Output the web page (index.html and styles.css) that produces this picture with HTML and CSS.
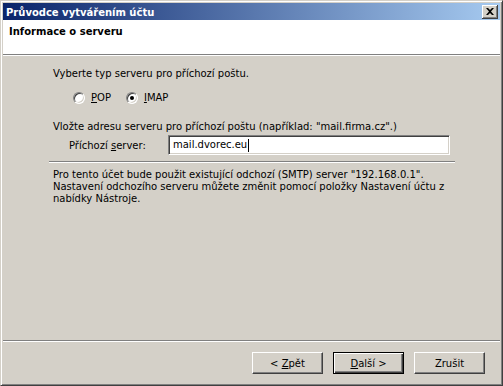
FILE: index.html
```html
<!DOCTYPE html>
<html lang="cs">
  <head>
    <meta charset="UTF-8" />
    <title>Průvodce vytvářením účtu</title>
    <link rel="stylesheet" href="styles.css">
  </head>
  <body>
    <div class="window">
      <div class="titlebar">
        <span class="title">Průvodce vytvářením účtu</span>
        <span class="close-btn">
          <svg width="8" height="7" viewBox="0 0 8 7">
            <path d="M0 0h2l2 2 2-2h2L5 3.5 8 7H6L4 5 2 7H0l3-3.5z" fill="#000" />
          </svg>
        </span>
      </div>

      <div class="header">
        <div class="header-title">Informace o serveru</div>
      </div>
      <div class="sep"></div>

      <div class="content">
        <p class="line">Vyberte typ serveru pro příchozí poštu.</p>
        <div class="radio-row">
          <label class="radio"><span class="radio-dot"></span><span><u>P</u>OP</span></label>
          <label class="radio"><span class="radio-dot checked"></span><span><u>I</u>MAP</span></label>
        </div>

        <p class="line hint">Vložte adresu serveru pro příchozí poštu (například: "mail.firma.cz".)</p>
        <div class="field-row">
          <span class="field-label">Příchozí <u>s</u>erver:</span>
          <div class="textbox">mail.dvorec.eu<span class="caret"></span></div>
        </div>
        <div class="sep inner-sep"></div>

        <p class="note">
          Pro tento účet bude použit existující odchozí (SMTP) server "192.168.0.1".<br>
          Nastavení odchozího serveru můžete změnit pomocí položky Nastavení účtu z<br>
          nabídky Nástroje.
        </p>
      </div>

      <div class="sep"></div>
      <div class="buttons">
        <button class="btn">&lt; <u>Z</u>pět</button>
        <button class="btn default"><u>D</u>alší &gt;</button>
        <button class="btn">Zrušit</button>
      </div>
    </div>
  </body>
</html>
```

FILE: styles.css
```css
body {
  margin: 0;
  padding: 0;
  font-family: "DejaVu Sans", sans-serif;
  font-size: 10px;
  color: #000;
  background: #d4d0c8;
}
.window {
  width: 503px;
  height: 386px;
  box-sizing: border-box;
  display: flex;
  flex-direction: column;
  background: #d4d0c8;
  border-top: 1px solid #d4d0c8;
  border-left: 1px solid #d4d0c8;
  border-right: 1px solid #404040;
  border-bottom: 1px solid #404040;
  box-shadow: inset 1px 1px 0 #fff, inset -1px -1px 0 #808080;
  padding: 2px 2px 2px 2px;
}
.titlebar {
  height: 18px;
  flex: none;
  display: flex;
  align-items: center;
  justify-content: space-between;
  padding: 0 2px 0 3px;
  background: linear-gradient(to right, #0a246a, #a6caf0);
  color: #fff;
  font-weight: bold;
  font-size: 10px;
}
.close-btn {
  width: 16px;
  height: 14px;
  box-sizing: border-box;
  display: flex;
  align-items: center;
  justify-content: center;
  background: #d4d0c8;
  border-right: 1px solid #404040;
  border-bottom: 1px solid #404040;
  box-shadow: inset 1px 1px 0 #fff, inset -1px -1px 0 #808080;
}
.header {
  height: 34px;
  flex: none;
  background: #fff;
  margin-top: -1px;
  padding: 6px 0 0 6px;
  box-sizing: border-box;
}
.header-title {
  font-weight: bold;
}
.sep {
  height: 0;
  flex: none;
  border-top: 1px solid #808080;
  border-bottom: 1px solid #fff;
}
.content {
  flex: 1;
  padding: 11px 46px 0 50px;
}
.line {
  margin: 0;
  line-height: 13px;
}
.radio-row {
  display: flex;
  gap: 15px;
  margin: 11px 0 0 20px;
  height: 13px;
}
.radio {
  display: flex;
  align-items: center;
  gap: 6px;
}
.radio-dot {
  width: 12px;
  height: 12px;
  box-sizing: border-box;
  border-radius: 50%;
  background: #fff;
  border: 1px solid;
  border-color: #808080 #fff #fff #808080;
  box-shadow: inset 1px 1px 0 #404040, inset -1px -1px 0 #d4d0c8;
  position: relative;
}
.radio-dot.checked::after {
  content: "";
  position: absolute;
  left: 3px;
  top: 3px;
  width: 4px;
  height: 4px;
  border-radius: 50%;
  background: #000;
}
.hint {
  margin-top: 16px;
}
.field-row {
  display: flex;
  align-items: center;
  margin: 2px 0 0 16px;
}
.field-label {
  width: 99px;
}
.textbox {
  width: 282px;
  height: 20px;
  box-sizing: border-box;
  background: #fff;
  border: 1px solid;
  border-color: #808080 #fff #fff #808080;
  box-shadow: inset 1px 1px 0 #404040, inset -1px -1px 0 #d4d0c8;
  padding: 3px 0 0 4px;
  font-size: 10px;
  display: flex;
  align-items: flex-start;
}
.caret {
  display: inline-block;
  width: 1px;
  height: 13px;
  background: #000;
  margin-left: 1px;
}
.inner-sep {
  margin: 6px 0 0 -4px;
  width: 406px;
}
.note {
  margin: 6px 0 0 0;
  line-height: 12px;
}
.buttons {
  flex: none;
  height: 41px;
  display: flex;
  justify-content: flex-end;
  gap: 10px;
  padding: 10px 15px 0 0;
  box-sizing: border-box;
}
.btn {
  width: 71px;
  height: 22px;
  padding: 0;
  font-family: inherit;
  font-size: 10px;
  color: #000;
  background: #d4d0c8;
  border: 1px solid;
  border-color: #fff #404040 #404040 #fff;
  box-shadow: inset -1px -1px 0 #808080, inset 1px 1px 0 #d4d0c8;
}
.btn.default {
  border: 1px solid #000;
  box-shadow: inset 1px 1px 0 #fff, inset -1px -1px 0 #404040, inset -2px -2px 0 #808080;
}
```
